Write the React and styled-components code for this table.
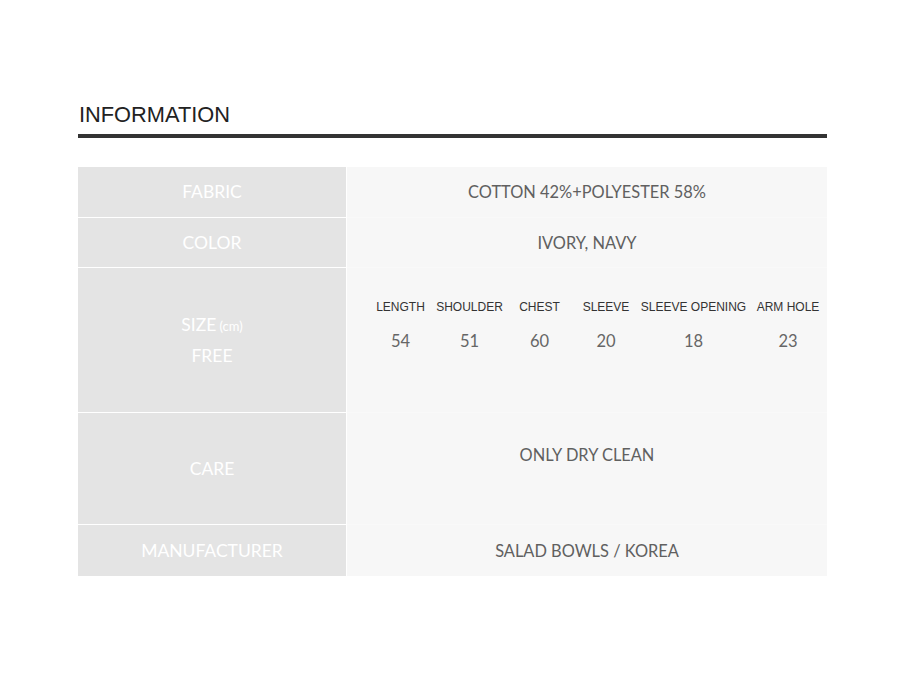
import React from "react";
import styled, { createGlobalStyle } from "styled-components";

const GlobalStyle = createGlobalStyle`
  body {
    margin: 0;
    background: #ffffff;
  }
`;

const Page = styled.div`
  padding: 102px 0 0 78px;
  width: 749px;
`;

const Title = styled.h2`
  margin: 0;
  font-family: "Liberation Sans", Arial, sans-serif;
  font-weight: normal;
  font-size: 21.8px;
  line-height: 25px;
  color: #222;
  padding-left: 1px;
`;

const Bar = styled.div`
  margin-top: 7px;
  height: 4px;
  background: #333333;
`;

const Table = styled.div`
  margin-top: 29px;
  display: flex;
  flex-direction: column;
`;

const Row = styled.div`
  display: grid;
  grid-template-columns: 268px 480px;
  column-gap: 1px;
  height: ${(p) => p.h}px;
`;

const Label = styled.div`
  background: #e4e4e4;
  border-bottom: ${(p) => (p.last ? "none" : "1px solid #ffffff")};
  display: flex;
  flex-direction: column;
  align-items: center;
  justify-content: center;
  font-family: Lato, "Open Sans", sans-serif;
  font-size: 17.5px;
  line-height: 30px;
  color: #ffffff;
`;

const Small = styled.span`
  font-size: 13px;
  margin-left: 3px;
`;

const Value = styled.div`
  background: #f7f7f7;
  border-bottom: ${(p) => (p.last ? "none" : "1px solid #f9f9f9")};
  display: flex;
  flex-direction: column;
  align-items: center;
  justify-content: ${(p) => (p.top ? "flex-start" : "center")};
  padding-top: ${(p) => (p.top ? p.top : 0)}px;
  box-sizing: border-box;
  font-family: Lato, "Open Sans", sans-serif;
  font-size: 16.4px;
  line-height: 20px;
  color: #606060;
`;

const SizeGrid = styled.div`
  align-self: flex-start;
  margin-left: 19px;
  display: grid;
  grid-template-columns: 69px 69px 71px 62px 113px 76px;
  row-gap: 18px;
  text-align: center;
`;

const Head = styled.div`
  font-family: "Liberation Sans", Arial, sans-serif;
  font-size: 12px;
  line-height: 14px;
  color: #333333;
  white-space: nowrap;
`;

const Num = styled.div`
  font-family: Lato, "Open Sans", sans-serif;
  font-size: 16.5px;
  line-height: 18px;
  color: #666666;
`;

const sizes = [
  ["LENGTH", "54"],
  ["SHOULDER", "51"],
  ["CHEST", "60"],
  ["SLEEVE", "20"],
  ["SLEEVE OPENING", "18"],
  ["ARM HOLE", "23"],
];

export default function App() {
  return (
    <>
      <GlobalStyle />
      <Page>
        <Title>INFORMATION</Title>
        <Bar />
        <Table>
          <Row h={51}>
            <Label>FABRIC</Label>
            <Value>COTTON 42%+POLYESTER 58%</Value>
          </Row>
          <Row h={50}>
            <Label>COLOR</Label>
            <Value>IVORY, NAVY</Value>
          </Row>
          <Row h={145}>
            <Label>
              <div>
                SIZE<Small>(cm)</Small>
              </div>
              <div>FREE</div>
            </Label>
            <Value top={32}>
              <SizeGrid>
                {sizes.map(([name]) => (
                  <Head key={name}>{name}</Head>
                ))}
                {sizes.map(([name, val]) => (
                  <Num key={name + "v"}>{val}</Num>
                ))}
              </SizeGrid>
            </Value>
          </Row>
          <Row h={112}>
            <Label>CARE</Label>
            <Value top={32}>ONLY DRY CLEAN</Value>
          </Row>
          <Row h={51}>
            <Label last>MANUFACTURER</Label>
            <Value last>SALAD BOWLS / KOREA</Value>
          </Row>
        </Table>
      </Page>
    </>
  );
}
